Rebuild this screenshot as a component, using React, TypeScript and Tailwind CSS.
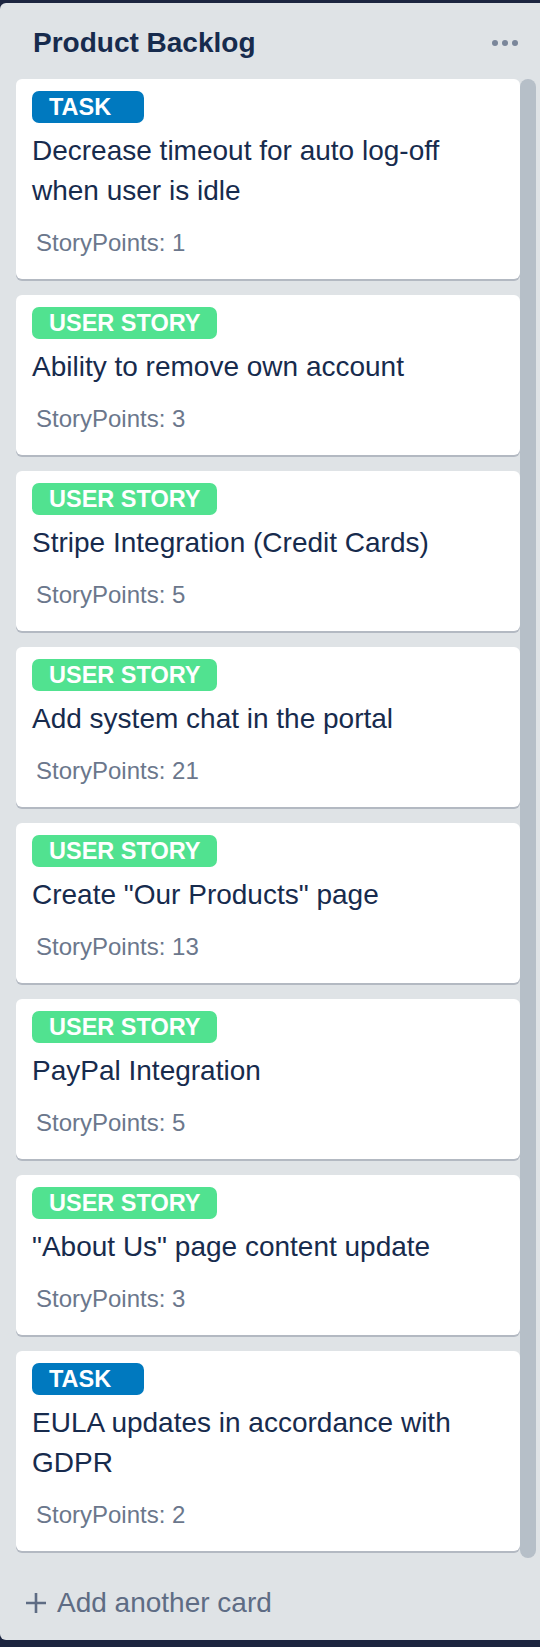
import React from "react";

type CardData = { label: "TASK" | "USER STORY"; title: string; points: number };

const cards: CardData[] = [
  { label: "TASK", title: "Decrease timeout for auto log-off when user is idle", points: 1 },
  { label: "USER STORY", title: "Ability to remove own account", points: 3 },
  { label: "USER STORY", title: "Stripe Integration (Credit Cards)", points: 5 },
  { label: "USER STORY", title: "Add system chat in the portal", points: 21 },
  { label: "USER STORY", title: 'Create "Our Products" page', points: 13 },
  { label: "USER STORY", title: "PayPal Integration", points: 5 },
  { label: "USER STORY", title: '"About Us" page content update', points: 3 },
  { label: "TASK", title: "EULA updates in accordance with GDPR", points: 2 },
];

function Card({ c }: { c: CardData }) {
  const isTask = c.label === "TASK";
  return (
    <div className="mb-[16px] rounded-[6px] bg-white px-[16px] pt-[12px] pb-[20px] shadow-[0_2px_0_#b3b9c2]">
      <div className="flex">
        <span
          className={
            isTask
              ? "h-[32px] min-w-[112px] rounded-[7px] bg-[#0079bf] pl-[17px] pr-[17px] text-[23.5px] font-bold leading-[32px] text-white"
              : "h-[32px] min-w-[112px] rounded-[7px] bg-[#51e290] pl-[17px] pr-[17px] text-[23.5px] font-bold leading-[32px] text-white"
          }
        >
          {c.label}
        </span>
      </div>
      <div className="mt-[8px] text-[28px] leading-[40px] text-[#172b4d]">{c.title}</div>
      <div className="mt-[16px] ml-[4px] text-[24px] leading-[32px] text-[#6b778c]">
        StoryPoints: {c.points}
      </div>
    </div>
  );
}

export default function App() {
  return (
    <div
      className="min-h-[1647px] w-full bg-[#1c2540] pt-[3px] pb-[7px]"
      style={{ fontFamily: '"Liberation Sans", Arial, sans-serif' }}
    >
      <div className="flex h-[1637px] flex-col rounded-tl-[6px] rounded-bl-[6px] bg-[#dfe3e6]">
        <div className="flex items-center justify-between pt-[20px] pl-[33px] pr-[22px]">
          <h2 className="text-[28px] font-bold leading-[40px] text-[#172b4d]">Product Backlog</h2>
          <div className="flex items-center gap-[4px]">
            <span className="h-[6px] w-[6px] rounded-full bg-[#7a869a]" />
            <span className="h-[6px] w-[6px] rounded-full bg-[#7a869a]" />
            <span className="h-[6px] w-[6px] rounded-full bg-[#7a869a]" />
          </div>
        </div>
        <div className="mt-[16px] flex h-[1479px] pl-[16px] pr-[4px]">
          <div className="flex-1 overflow-hidden">
            {cards.map((c, i) => (
              <Card key={i} c={c} />
            ))}
          </div>
          <div className="h-full w-[16px] rounded-[8px] bg-[#b6bfc8]" />
        </div>
        <div className="mt-[25px] flex items-center pl-[25px] text-[28px] leading-[40px] text-[#5e6c84]">
          <svg width="22" height="22" viewBox="0 0 22 22" className="mr-[10px]">
            <path d="M11 1v20M1 11h20" stroke="#5e6c84" strokeWidth="2.6" strokeLinecap="butt" />
          </svg>
          <span>Add another card</span>
        </div>
      </div>
    </div>
  );
}
